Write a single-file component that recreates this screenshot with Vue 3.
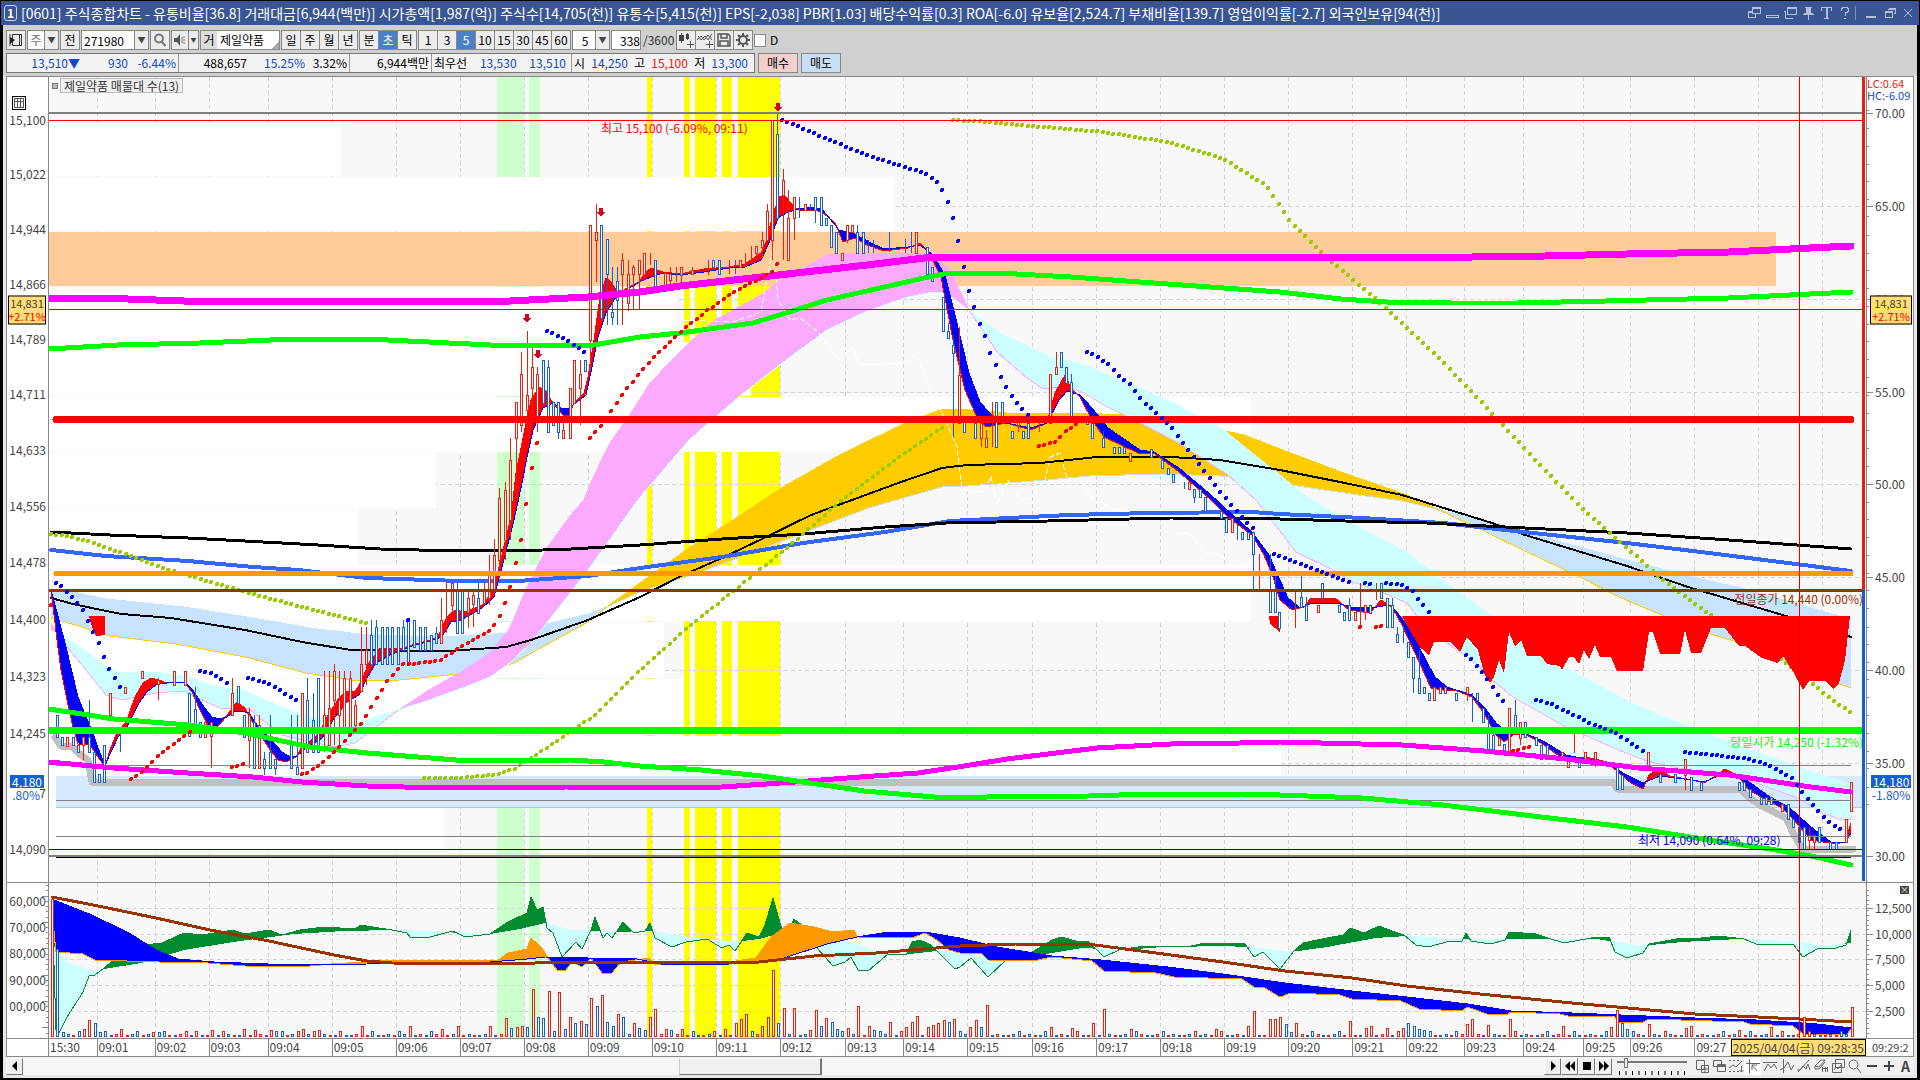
<template>
  <div class="window">
    <header class="title-bar">
      <span class="title-badge">1</span>
      <h1>[0601] 주식종합차트 - 유통비율[36.8] 거래대금[6,944(백만)] 시가총액[1,987(억)] 주식수[14,705(천)] 유통수[5,415(천)] EPS[-2,038] PBR[1.03] 배당수익률[0.3] ROA[-6.0] 유보율[2,524.7] 부채비율[139.7] 영업이익률[-2.7] 외국인보유[94(천)]</h1>
      <div class="title-actions">
        <button v-for="item in windowIcons" :key="item.name" :aria-label="item.name" :class="{ split: item.split }">
          <svg width="14" height="14" viewBox="0 0 14 14"><path :d="item.d" /></svg>
        </button>
      </div>
    </header>

    <div class="body">
      <div class="toolbar">
        <button class="box icon w20" aria-label="패널">
          <svg width="14" height="14" viewBox="0 0 14 14"><path d="M3.5 1.5h9v11h-9z M1 1v12M10.500 2v10" fill="none" stroke="#333" /><path d="M1 4l5 3-5 4z" fill="#222" /></svg>
        </button>
        <div class="group w32">
          <button class="box grow muted">주</button>
          <button class="box arrow" aria-label="주 선택">▼</button>
        </div>
        <button class="box w20">전</button>
        <div class="group w68">
          <input v-model="code" class="box grow" aria-label="종목코드" />
          <button class="box arrow" aria-label="종목 선택">▼</button>
        </div>
        <button class="box icon w20" aria-label="검색">
          <svg width="14" height="14" viewBox="0 0 14 14"><path d="M6 1.500a4 4 0 1 1 0 8a4 4 0 1 1 0-8M8.500 8.500l4 4.500" fill="none" stroke="#777" stroke-width="2" /></svg>
        </button>
        <div class="group w28">
          <button class="box icon grow" aria-label="음성">
            <svg width="14" height="14" viewBox="0 0 14 14"><path d="M1 5h3l3-4v12l-3-4H1z" fill="#555" /><path d="M9 4v6M11 3v2M11 6v2M11 9v2" stroke="#777" /></svg>
          </button>
          <button class="box arrow slim" aria-label="음성 선택">▼</button>
        </div>
        <div class="box stock w80"><span>거</span>제일약품</div>
        <div class="group segments">
          <button v-for="p in ['일', '주', '월', '년']" :key="p" class="box">{{ p }}</button>
        </div>
        <div class="group segments">
          <button v-for="p in ['분', '초', '틱']" :key="p" class="box" :class="{ active: p === unit }" @click="unit = p">{{ p }}</button>
        </div>
        <div class="group segments">
          <button v-for="n in [1, 3, 5, 10, 15, 30, 45, 60]" :key="n" class="box" :class="{ active: n === interval }" @click="interval = n">{{ n }}</button>
        </div>
        <div class="group w40">
          <input class="box grow center" aria-label="간격" :value="interval" />
          <button class="box arrow" aria-label="간격 선택">▼</button>
        </div>
        <div class="group w60">
          <input class="box count" aria-label="표시 개수" value="338" />
          <span class="total">/3600</span>
        </div>
        <div class="group segments">
          <button v-for="item in toolIcons" :key="item.name" class="box icon" :aria-label="item.name">
            <svg width="16" height="16" viewBox="0 0 16 16"><path :d="item.d" fill="none" stroke="#555" :stroke-width="item.w" /><path v-if="item.f" :d="item.f" fill="#444" /></svg>
          </button>
        </div>
        <label class="check"><input type="checkbox" />D</label>
      </div>

      <div class="quote">
        <div class="quote-cells">
          <div v-for="(cell, i) in quote" :key="i" class="cell" :class="'cell-' + i">
            <span v-for="part in cell" :key="part[0] + part[1]" :class="part[1]">{{ part[0] }}</span>
          </div>
        </div>
        <button class="order buy">매수</button>
        <button class="order sell">매도</button>
      </div>

      <main class="chart">
        <aside class="axis left">
          <button class="grid-button" aria-label="표">
            <svg width="10" height="10" viewBox="0 0 10 10"><path d="M0 0.500h10M0 3.500h10M0 9.500h10M0.500 0v10M3.500 0v10M6.500 0v10M9.500 0v10" stroke="#555" /></svg>
          </button>
          <span v-for="p in prices" :key="p[0]" class="price" :style="{ top: mainTop(p[1]) }">{{ p[0] }}</span>
          <div class="cursor-tag" :style="{ top: mainTop(309.5) }">14,831<em>+2.71%</em></div>
          <div class="now-tag" :style="{ top: mainTop(788) }"><b>4,180</b><i>.80%</i></div>
        </aside>

        <section class="plot main-plot">
          <div class="legend"><i></i><span>제일약품 매물대 수(13)</span></div>
          <svg class="canvas" viewBox="49 77 1817 805">
            <rect x="49" y="77" width="1817" height="805" fill="#f8f8f8" />
            <g fill="#cfc"><rect x="497" y="77" width="27" height="805" /><rect x="529" y="77" width="11" height="805" /></g>
            <g fill="#ff0"><rect v-for="y in yellow" :key="y[0]" :x="y[0]" y="77" :width="y[1]" height="805" /></g>
            <g class="grid">
              <path v-for="t in times" :key="t[0]" :d="`M${t[1]} 77V882`" />
              <path v-for="y in [206, 299, 392, 484, 577, 670, 763, 856]" :key="y" :d="`M49 ${y}.5H1863`" />
            </g>
            <rect v-for="b in volumeRows" :key="b[0]" x="49" :y="b[0]" :width="b[2] - 49" :height="b[1] - b[0]" :fill="b[3] || '#fff'" />

            <rect x="56" y="776" width="1807" height="31" fill="#d6eaff" />
            <path d="M56 807.500H1863" stroke="#9cf" />
            <polyline :points="support" class="line" stroke="#c0c0c0" stroke-width="7" />

            <path :d="fill(spanA, spanB)" fill="#c8e3ff" />
            <path :d="fill(spanB, spanA)" fill="#fc0" />
            <polyline :points="spanA" class="line" stroke="#c8e3ff" />
            <polyline :points="spanB" class="line" stroke="#fc0" />
            <path :d="fill(cyanEdge, pinkEdge)" fill="#cff" />
            <path :d="fill(pinkEdge, cyanEdge)" fill="#fcaaff" />
            <polyline :points="pinkEdge" class="line" stroke="#fcaaff" />
            <polyline :points="cyanEdge" class="line" stroke="#cff" />
            <polyline :points="lagging" class="line" stroke="#fff" stroke-dasharray="5 3" />

            <polyline :points="midBlack" class="line" stroke="#000" stroke-width="2" />
            <polyline :points="blueAverage" class="line" stroke="#36f" stroke-width="4" />
            <polyline :points="blackAverage" class="line" stroke="#000" stroke-width="3" />
            <circle v-for="(d, i) in oliveDots" :key="'o' + i" :cx="d[0]" :cy="d[1]" r="2" fill="#9c0" />
            <polygon :points="'1402,616 ' + redArea" fill="#f00" />
            <polygon points="89,616 105,616 105,635 96,636 92,627" fill="#f00" />
            <polygon points="1269,616 1280,616 1280,632 1275,628 1270,624" fill="#f00" />

            <path :d="fill(fast, slow)" fill="#f00" />
            <path :d="fill(slow, fast)" fill="#00f" />
            <polyline :points="fast" class="line" stroke="#f00" />
            <polyline :points="slow" class="line" stroke="#00f" />
            <g stroke-width="1">
              <g v-for="(c, i) in candles" :key="i" :stroke="c.color" fill="none">
                <path :d="`M${c.x} ${c.high}V${c.top}M${c.x} ${c.bottom}V${c.low}`" />
                <rect :x="c.x - 1" :y="c.top" width="2" :height="c.bottom - c.top" fill="#fff" />
              </g>
            </g>

            <path d="M56 765.500H1851M56 800.500H1851M56 836.500H1851" stroke="#808080" />
            <polyline :points="magentaLow" class="line" stroke="#f0f" stroke-width="5" />
            <polyline :points="greenLow" class="line" stroke="#0f0" stroke-width="5" />
            <polyline :points="magentaHigh" class="line" stroke="#f0f" stroke-width="7" />
            <polyline :points="greenHigh" class="line" stroke="#0f0" stroke-width="5" />
            <path d="M56 419.500H1851" class="line" stroke="#f00" stroke-width="7" />
            <path d="M56 573.500H1851" class="line" stroke="#f90" stroke-width="5" />
            <path d="M49 590.500H1863" stroke="#930" stroke-width="3" />
            <path d="M49 730.500H1863" stroke="#0f0" stroke-width="7" />
            <circle v-for="(d, i) in blueDots" :key="'b' + i" :cx="d[0]" :cy="d[1]" r="2" fill="#00f" />
            <circle v-for="(d, i) in redDots" :key="'r' + i" :cx="d[0]" :cy="d[1]" r="2" fill="#f00" />

            <path d="M49 113H1863M49 856H1863" stroke="#808080" stroke-width="2" />
            <path d="M56 857.500H1851" stroke="#000" />
            <path d="M49 849.500H1863" stroke="#00c" />
            <path d="M49 120.500H1863" stroke="#f00" />
            <path v-for="a in arrows" :key="a[0]" :d="`M${a[0] - 2} ${a[1] - 4}h4v4h2l-4 5l-4-5h2z`" fill="#d9001b" />
            <g class="note">
              <text x="601" y="133" fill="#f00">최고 15,100 (-6.09%, 09:11)</text>
              <text x="1863" y="604" fill="#930" text-anchor="end">전일종가 14,440 (0.00%)</text>
              <text x="1863" y="747" fill="#0f0" text-anchor="end">당일시가 14,250 (-1.32%)</text>
              <text x="1638" y="845" fill="#00c">최저 14,090 (0.64%, 09:28)</text>
            </g>
            <path d="M49 309.500H1863M1799.500 77V882" stroke="#e00000" />
            <path d="M1863.500 77V590" stroke="#e8200f" stroke-width="3" />
            <path d="M1863.500 590V881" stroke="#1460d0" stroke-width="3" />
          </svg>
        </section>

        <aside class="axis right">
          <svg class="ticks" viewBox="1866 77 48 805">
            <path v-for="k in 40" :key="k" :d="`M1866 ${94.500 + Math.round((k - 1) * 18.57)}h2`" />
          </svg>
          <p class="extremes"><span class="up">LC:0.64</span><span class="down">HC:-6.09</span></p>
          <span v-for="(y, i) in scaleRows" :key="y" class="scale" :style="{ top: mainTop(y) }">{{ 70 - i * 5 }}.00</span>
          <div class="cursor-tag" :style="{ top: mainTop(309.5) }">14,831<em>+2.71%</em></div>
          <div class="now-tag" :style="{ top: mainTop(788) }"><b>14,180</b><i>-1.80%</i></div>
        </aside>

        <aside class="axis left sub">
          <svg class="ticks" viewBox="7 883 41 155">
            <path v-for="k in 29" :key="k" :d="`M${(k - 3) % 5 ? 46 : 42} ${885.500 + Math.round((k - 1) * 5.270)}H48`" />
          </svg>
          <span v-for="p in amounts" :key="p[0]" class="price" :style="{ top: subTop(p[1]) }">{{ p[0] }}</span>
        </aside>

        <section class="plot sub">
          <svg class="canvas" viewBox="49 883 1817 155">
            <rect x="49" y="883" width="1817" height="155" fill="#f8f8f8" />
            <g fill="#cfc"><rect x="497" y="883" width="27" height="155" /><rect x="529" y="883" width="11" height="155" /></g>
            <g fill="#ff0"><rect v-for="y in yellow" :key="y[0]" :x="y[0]" y="883" :width="y[1]" height="155" /></g>
            <g class="grid">
              <path v-for="t in times" :key="t[0]" :d="`M${t[1]} 883V1038`" />
              <path v-for="y in [908, 934, 959, 985, 1011]" :key="y" :d="`M49 ${y}.5H1866`" />
            </g>
            <path :d="fill(moneyAverage, money)" fill="#cff" />
            <polyline :points="moneyAverage" class="line" stroke="#cff" />
            <polyline :points="money" class="line" stroke="#008c2e" />
            <path :d="fill(money, moneyAverage)" fill="#008c2e" />
            <path :d="fill(orangeLine, blueLine)" fill="#f90" />
            <path :d="fill(blueLine, orangeLine)" fill="#00f" />
            <polyline :points="orangeLine" class="line" stroke="#f90" />
            <polyline :points="blueLine" class="line" stroke="#00f" />
            <polyline :points="brownLine" class="line" stroke="#930" stroke-width="3" />
            <rect v-for="(v, i) in volumes" :key="i" :x="v.x" :y="1036.500 - v.h" width="2" :height="v.h" fill="#fff" :stroke="v.color" />
            <path d="M1799.500 883V1038" stroke="#e00000" />
          </svg>
        </section>

        <aside class="axis right sub">
          <button class="close-pane" aria-label="닫기">×</button>
          <svg class="ticks" viewBox="1866 883 48 155">
            <path v-for="k in 30" :key="k" :d="`M1866 ${887.500 + Math.round((k - 1) * 5.150)}h2`" />
          </svg>
          <span v-for="p in flows" :key="p[0]" class="scale" :style="{ top: subTop(p[1]) }">{{ p[0] }}</span>
        </aside>

        <div class="corner"></div>
        <div class="time-axis">
          <span :style="{ left: '0%' }">15:30</span>
          <span v-for="t in times.slice(0, 27)" :key="t[0]" :style="{ left: (t[1] - 49) / 18.17 + '%' }">{{ t[0] }}</span>
          <b>2025/04/04(금) 09:28:35</b>
        </div>
        <div class="corner end">09:29:2</div>
      </main>

      <footer class="bottom-bar">
        <button class="raised" aria-label="왼쪽"><svg width="8" height="10" viewBox="0 0 8 10"><path d="M6 0v10L1 5z" /></svg></button>
        <div class="track"><div class="thumb"></div></div>
        <div class="group">
          <button v-for="item in players" :key="item.name" class="raised" :aria-label="item.name">
            <svg width="12" height="10" viewBox="0 0 12 10"><path :d="item.d" /></svg>
          </button>
        </div>
        <label class="speed">
          <input v-model="speed" type="range" min="0" max="10" aria-label="속도" />
          <svg width="70" height="4" viewBox="0 0 70 4"><path v-for="k in 11" :key="k" :d="`M${k * 6.500 - 4} 0v4`" stroke="#000" /></svg>
        </label>
        <div class="group drawing">
          <button v-for="item in drawIcons" :key="item.name" :aria-label="item.name" :class="{ pressed: item.pressed }">
            <svg width="16" height="16" viewBox="0 0 16 16"><path :d="item.d" fill="none" :stroke="item.c || '#666'" :stroke-width="item.w || 1" /></svg>
          </button>
          <button class="letter">A</button>
        </div>
      </footer>
    </div>
  </div>
</template>

<script setup>
import { ref } from "vue";

const code = ref("271980");
const unit = ref("초");
const interval = ref(5);
const speed = ref(1);

const mainTop = (y) => ((y - 77) / 805) * 100 + "%";
const subTop = (y) => ((y - 883) / 155) * 100 + "%";

const parse = (text) => text.trim().split(/\s+/).map((p) => p.split(",").map(Number));

// linear interpolation of a series at x
const valueAt = (points, x) => {
  if (x <= points[0][0]) return points[0][1];
  for (let i = 1; i < points.length; i++) {
    const [x1, y1] = points[i];
    if (x <= x1) {
      const [x0, y0] = points[i - 1];
      return y0 + ((y1 - y0) * (x - x0)) / (x1 - x0 || 1);
    }
  }
  return points[points.length - 1][1];
};

// area where series a runs above series b
const fill = (a, b) => {
  const pa = parse(a);
  const pb = parse(b);
  const top = [];
  const bottom = [];
  for (let x = 51; x <= 1851; x += 2) {
    const ya = valueAt(pa, x);
    const yb = valueAt(pb, x);
    top.push(`${x} ${Math.min(ya, yb).toFixed(1)}`);
    bottom.unshift(`${x} ${yb.toFixed(1)}`);
  }
  return `M${top.join("L")}L${bottom.join("L")}Z`;
};

const BAR = 5.34;
const dots = (groups) =>
  groups.flatMap((text) => {
    const points = parse(text);
    const last = points[points.length - 1][0];
    const result = [];
    for (let x = points[0][0]; x <= last + 1; x += BAR) result.push([Math.round(x), Math.round(valueAt(points, x))]);
    return result;
  });

const times = [
  ["09:01", 97.5], ["09:02", 155.5], ["09:03", 209.5], ["09:04", 268.5], ["09:05", 332.5], ["09:06", 396.5],
  ["09:07", 460.5], ["09:08", 524.5], ["09:09", 588.5], ["09:10", 652.5], ["09:11", 716.5], ["09:12", 780.5],
  ["09:13", 845.5], ["09:14", 903.5], ["09:15", 967.5], ["09:16", 1032.5], ["09:17", 1096.5], ["09:18", 1160.5],
  ["09:19", 1224.5], ["09:20", 1288.5], ["09:21", 1352.5], ["09:22", 1406.5], ["09:23", 1464.5], ["09:24", 1523.5],
  ["09:25", 1583.5], ["09:26", 1630.5], ["09:27", 1694.5], ["09:28", 1758.5], ["09:29", 1822.5],
];
const yellow = [[647, 5], [684, 6], [695, 21], [722, 10], [738, 42]];
const volumeRows = [
  [123, 176, 341], [177, 231, 894], [232, 286, 1776, "#ffcc99"], [287, 341, 676], [342, 396, 751], [397, 452, 1251],
  [453, 508, 436], [509, 564, 358], [565, 621, 1251], [622, 678, 664], [679, 735, 683], [736, 793, 1281], [794, 850, 444],
];
const prices = [
  ["15,100", 120], ["15,022", 174], ["14,944", 229], ["14,866", 284], ["14,789", 339], ["14,711", 394], ["14,633", 450],
  ["14,556", 506], ["14,478", 562], ["14,400", 619], ["14,323", 676], ["14,245", 733], ["14,167", 793], ["14,090", 849],
];
const scaleRows = [113, 206, 299, 392, 484, 577, 670, 763, 856];
const amounts = [["60,000", 901], ["70,000", 927], ["80,000", 953], ["90,000", 980], ["00,000", 1006]];
const flows = [["12,500", 908], ["10,000", 934], ["7,500", 959], ["5,000", 985], ["2,500", 1011]];
const arrows = [[527, 318], [538, 354], [601, 212], [778, 107]];

const quote = [
  [["13,510▼", "down a"], ["930", "down b"], ["-6.44%", "down c"]],
  [["488,657", "d"], ["15.25%", "down e"], ["3.32%", "f"]],
  [["6,944백만", ""]],
  [["최우선", ""], ["13,530", "down"], ["13,510", "down"]],
  [["시", ""], ["14,250", "down"], ["고", ""], ["15,100", "up"], ["저", ""], ["13,300", "down"]],
];

const magentaHigh = "49,298 100,298 184,301 420,301 510,301 588,297 640,292 680,286 761,277 867,265 933,257 1140,257 1280,257 1472,257 1545,256 1627,254 1729,252 1851,246";
const greenHigh = "49,349 118,345 200,343 294,339 367,339 408,341 490,345 518,345 543,345 588,346 640,337 680,333 753,323 786,313 827,300 867,291 924,278 949,273 998,273 1071,277 1140,282 1280,292 1341,299 1386,302 1451,303 1517,303 1606,301 1729,298 1851,292";
const blackAverage = "51,532 110,535 188,538 245,541 318,545 380,549 457,551 543,550 571,549 640,545 722,539 803,534 885,527 946,523 1048,521 1171,518 1280,519 1345,521 1427,523 1525,528 1627,533 1729,540 1851,549";
const blueAverage = "51,550 106,556 188,561 253,567 298,570 367,578 461,581 518,581 588,576 640,568 722,557 803,543 885,532 950,521 1069,515 1150,513 1252,512 1280,514 1362,518 1443,523 1533,533 1627,543 1709,553 1851,571";
const midBlack = "51,598 73,604 106,611 122,614 171,618 245,630 302,642 351,650 400,651 449,651 506,647 531,640 588,620 640,597 681,576 722,558 762,539 811,515 852,500 901,482 942,468 967,465 1040,463 1097,457 1171,457 1220,460 1280,470 1345,483 1402,495 1492,523 1525,535 1627,566 1688,587 1786,616 1851,637";
const spanA = "51,589 78,593 106,599 184,607 253,618 310,628 359,634 408,636 461,636 510,633 539,626 588,614 612,605 640,592 701,572 762,549 803,533 869,508 942,487 967,486 1048,480 1089,476 1162,474 1220,476 1280,483 1304,487 1358,495 1402,501 1435,509 1476,518 1525,532 1627,560 1688,576 1741,588 1839,616 1851,620";
const spanB = "51,618 82,627 110,636 176,644 245,657 306,673 359,681 400,680 449,675 498,668 514,663 551,642 588,622 608,606 640,583 689,548 738,517 783,487 836,457 901,425 940,410 958,409 1007,413 1073,413 1130,415 1187,423 1244,435 1280,449 1341,472 1407,495 1435,508 1484,531 1525,551 1574,574 1619,597 1664,616 1711,634 1737,642 1839,684 1851,688";
const cyanEdge = "51,630 73,643 88,653 106,667 118,672 163,673 188,677 212,686 245,691 269,702 302,715 327,722 359,722 392,712 429,700 465,687 490,677 510,663 531,643 571,592 588,570 640,497 655,480 689,440 704,427 741,395 786,360 827,330 867,311 908,297 933,292 945,292 969,310 998,332 1031,348 1051,357 1084,365 1140,388 1167,400 1211,423 1224,430 1252,453 1280,475 1304,495 1341,518 1370,533 1407,552 1431,572 1492,616 1566,668 1631,703 1688,727 1770,757 1831,778 1851,784";
const pinkEdge = "51,623 57,635 82,665 106,695 122,700 155,693 184,691 196,697 220,708 249,709 265,722 282,735 302,740 335,747 355,743 376,727 396,712 429,690 461,672 490,653 510,628 527,587 547,548 571,515 584,500 592,480 610,443 631,413 651,382 684,348 712,322 761,295 778,282 806,267 827,255 855,253 929,253 949,268 969,310 998,353 1027,378 1043,389 1067,386 1084,393 1104,405 1138,422 1179,443 1228,475 1256,500 1280,531 1296,552 1333,570 1353,582 1382,592 1407,603 1417,616 1447,643 1476,663 1492,680 1513,697 1566,727 1619,750 1647,761 1688,770 1737,775 1762,785 1798,798 1823,813 1839,819 1851,820";
const magentaLow = "49,762 114,768 188,773 253,777 302,782 367,786 441,788 567,787 640,788 722,787 795,782 860,777 918,773 958,767 1007,759 1097,748 1171,744 1240,743 1280,742 1402,745 1484,751 1566,759 1639,768 1729,775 1811,787 1851,792";
const greenLow = "49,709 82,714 114,719 188,725 245,733 310,747 367,753 469,761 571,760 604,762 640,766 701,770 762,776 824,785 864,791 934,797 987,797 1089,796 1150,794 1240,794 1280,795 1362,798 1443,805 1541,817 1627,827 1709,840 1770,849 1811,856 1851,865";
const support = "55,737 61,746 73,747 78,753 88,760 92,782 1613,782 1617,789 1741,789 1749,798 1762,806 1774,812 1786,818 1794,835 1802,849 1853,849";
const lagging = "676,320 733,322 761,312 773,247 778,300 790,320 800,318 818,332 839,360 853,347 859,365 908,363 916,353 929,387 941,410 957,447 962,490 985,492 991,476 997,505 1008,480 1020,500 1031,498 1045,480 1050,457 1060,453 1069,486 1083,487 1097,502 1117,510 1160,518 1174,533 1190,533 1204,553 1215,553 1236,563 1248,574";

const fast = "51,590 57,640 61,670 67,700 73,727 78,744 84,744 90,745 98,757 105,767 110,750 116,735 127,720 135,697 143,683 151,678 159,680 167,683 184,682 192,692 200,710 208,725 216,728 222,722 233,707 237,702 245,708 257,730 269,748 278,760 286,762 296,757 302,747 318,735 327,717 339,698 347,691 355,692 361,682 369,663 380,648 388,648 400,649 412,645 437,638 447,617 455,610 465,612 482,605 494,590 500,563 508,530 512,510 516,473 524,433 531,400 539,387 545,390 553,403 563,415 569,415 573,405 584,393 588,377 594,340 600,297 606,278 612,283 618,293 639,282 645,273 651,268 663,272 680,274 704,269 729,267 745,264 761,253 767,240 773,213 780,196 786,197 794,207 800,210 814,210 822,212 835,223 843,242 855,238 867,245 884,251 908,248 920,243 929,252 941,277 953,340 965,390 976,415 986,427 996,425 1006,423 1031,430 1047,423 1055,393 1065,375 1071,388 1080,397 1092,420 1104,437 1138,453 1154,453 1179,472 1211,500 1228,517 1252,535 1264,555 1273,577 1280,600 1292,610 1304,607 1311,598 1335,598 1349,610 1370,613 1381,600 1392,607 1402,625 1415,653 1431,688 1443,690 1455,690 1472,697 1484,713 1496,735 1504,742 1513,735 1525,734 1541,743 1562,758 1574,757 1590,758 1607,762 1619,773 1631,783 1643,789 1649,775 1658,769 1670,776 1692,780 1704,783 1717,775 1725,769 1737,775 1749,790 1770,802 1782,808 1794,820 1811,840 1835,844 1845,842 1851,823";
const slow = "51,590 53,597 65,643 78,697 86,717 92,730 98,748 105,765 118,737 127,727 139,703 147,692 157,684 167,683 184,682 192,689 204,707 212,717 220,719 227,717 233,712 241,711 249,713 257,725 269,737 282,752 290,757 297,756 306,748 322,738 335,717 347,702 359,695 367,678 376,663 388,656 400,651 412,646 437,639 443,635 451,622 461,620 482,608 494,597 502,567 514,520 522,483 527,457 533,430 543,408 553,403 563,409 569,408 586,395 592,367 598,337 606,313 616,297 639,282 651,277 663,273 680,275 704,272 729,268 745,267 761,260 769,243 778,218 786,213 798,209 810,207 822,209 839,230 855,234 871,243 884,249 908,247 920,245 933,255 945,275 953,307 961,340 969,373 980,402 994,418 1006,423 1031,428 1047,423 1059,400 1067,391 1080,395 1092,408 1108,428 1140,450 1154,452 1179,468 1211,495 1236,518 1252,532 1269,555 1280,580 1288,598 1300,608 1313,603 1337,603 1351,607 1370,608 1390,605 1402,618 1419,647 1435,677 1447,687 1472,695 1484,707 1496,723 1509,733 1529,735 1545,742 1566,755 1607,763 1623,773 1643,783 1660,776 1692,780 1704,782 1725,773 1741,776 1770,797 1790,808 1811,827 1831,842 1845,843 1851,833";
const redArea = "1415,643 1429,655 1434,642 1451,642 1460,652 1467,637 1478,650 1484,673 1490,683 1494,677 1499,660 1504,673 1509,632 1515,646 1521,640 1527,656 1541,656 1547,664 1560,666 1562,670 1569,657 1574,657 1579,664 1584,650 1589,659 1595,645 1600,657 1611,657 1617,671 1643,671 1649,632 1653,632 1660,654 1680,654 1685,630 1691,653 1701,653 1711,628 1725,628 1739,646 1745,646 1762,658 1778,663 1783,656 1794,673 1803,690 1809,681 1825,681 1834,689 1839,683 1845,660 1850,616";

const blueDots = dots([
  "56,583 61,586 72,597 82,608 88,621 99,644 104,657 109,668 115,678 120,687",
  "200,671 211,673 219,677 227,683", "248,678 265,682 281,691 297,701", "547,331 563,338 585,352", "408,620",
  "782,120 788,122 827,139 867,155 927,174 932,178 938,183 943,191 948,203 953,218 959,245 964,269 969,291 975,309 980,325 986,339 991,355 1002,379 1012,397 1023,410 1028,415",
  "1087,352 1098,357 1108,364 1118,375 1130,384 1140,398 1146,404 1157,413 1173,429 1183,443 1194,457 1205,472 1220,491 1232,506 1247,523 1252,528",
  "1274,554 1285,558 1317,570 1353,584", "1365,583 1370,584", "1386,583 1402,585 1413,591 1419,600 1424,606 1429,612",
  "1466,655 1472,659 1477,666 1482,672 1493,687 1498,695 1504,702", "1536,700 1551,704 1568,712 1594,725 1616,733 1643,751",
  "1685,752 1723,756 1749,759 1766,764 1782,772 1792,778 1802,791 1808,799 1814,806 1819,812 1829,822 1840,829",
]);
const redDots = dots([
  "51,605", "131,779 141,773 152,762 157,757 168,748 184,736 192,730", "232,767 243,764",
  "302,774 307,773 318,766 328,758 339,747 350,735 360,725 371,708 376,699 382,690 387,682 392,676 403,664 414,664 441,660 451,653 472,640 489,631 494,625 499,617 505,603 510,588 515,566 521,540 526,506 531,471 537,443",
  "590,438 601,426 612,410 622,395 638,375 654,357 676,336 686,327 708,310 729,295 745,286 761,278 772,272 777,264",
  "1039,446 1055,442 1065,432 1076,424", "1360,627", "1376,627 1381,626", "1513,751 1531,746",
]);
const oliveDots = dots([
  "51,534 67,536 88,541 122,553 163,568 204,580 245,592 302,607 366,623",
  "424,778 457,778 494,775 514,769 536,755 563,737 596,714 637,673 644,667 687,628 750,578 799,538 820,519 844,498 895,460 946,425",
  "953,120 990,122 1031,126 1104,132 1140,138 1169,142 1224,159 1267,186 1290,221 1321,252 1386,308 1439,358 1488,409 1541,466 1584,510 1627,548 1664,581 1712,616 1782,660 1814,685 1829,697 1851,713",
]);

// x,high,top,bottom,low
const rising = `67,737,737,746,746 83,737,737,745,760 110,693,693,715,715 125,687,687,693,693 142,671,671,678,678 158,678,680,684,700 174,671,671,685,685 185,671,671,685,685 205,720,722,737,737 211,722,722,736,768 232,678,693,715,715 249,708,715,740,768 259,715,725,768,768
302,693,693,768,768 324,671,715,730,752 329,671,708,745,745 334,664,671,700,745 339,671,700,715,745 344,671,678,730,730 350,671,678,730,735 355,700,705,725,730 361,627,664,691,691 366,627,650,664,685 441,598,620,643,643 446,583,598,598,633 452,583,583,605,613 468,590,598,612,628 473,590,595,604,627 484,583,590,603,603 489,555,575,598,605 494,539,555,590,592 499,488,498,560,570 505,482,490,540,560 510,438,460,520,540
516,402,402,438,500 521,352,374,425,432 527,331,395,410,432 532,345,367,388,415 537,367,374,422,432 563,423,430,438,438 570,388,388,438,438 574,360,360,403,403 580,360,374,388,425 590,225,225,340,370 596,204,232,240,282 622,253,260,274,325 628,260,274,303,311 633,265,267,274,310 639,260,260,274,310 644,253,253,274,280 650,253,260,260,265 665,273,273,288,288 670,267,274,280,289 676,267,274,274,282 681,267,267,275,289 692,267,270,274,275 708,260,267,267,275 729,260,267,267,274 740,260,260,267,267 745,253,260,260,267 751,246,253,253,262 756,246,246,253,260 762,232,240,247,257 767,204,211,240,240 772,120,120,240,260 783,169,180,195,260 788,190,218,260,260 794,197,197,218,240
805,204,204,210,210 842,253,253,260,260 847,225,225,240,243 852,225,225,232,232 916,232,232,253,253 959,327,375,423,423 981,423,423,438,447 986,430,438,447,447 992,402,415,420,447 1018,417,417,425,432 1039,417,423,423,432 1050,374,374,423,423 1056,352,367,374,374 1130,453,453,461,461 1189,482,482,489,489 1232,518,518,532,532 1259,554,554,554,589
1295,590,598,598,628 1318,605,605,612,612 1355,612,612,620,620 1360,583,612,612,627 1365,605,605,612,620 1376,583,598,598,600 1434,687,687,700,700 1440,687,687,693,693 1445,687,687,693,693 1467,687,687,693,701 1499,738,738,745,745 1509,708,708,751,751 1520,722,722,738,745 1562,752,752,759,759 1568,759,759,767,767 1574,733,752,752,752 1585,752,752,759,759 1595,752,752,759,767 1648,752,752,767,767 1685,759,759,775,790 1782,804,804,811,811 1809,827,835,840,849 1814,835,835,842,849 1846,819,819,842,842 1851,782,782,811,811`;
const falling = `57,715,715,737,737 62,737,737,745,745 73,737,737,745,745 78,745,745,752,752 89,700,737,752,752 94,752,752,782,782 99,774,774,782,782 104,745,745,782,782 120,730,736,736,752 189,693,693,736,736 195,687,709,727,727 200,722,722,737,737 238,686,686,703,703 244,715,715,737,737 254,715,722,768,768 264,752,759,768,775 270,715,752,768,768 275,759,759,768,775 291,715,745,768,768 297,715,767,774,774 307,678,700,752,752 313,693,720,752,752 318,678,678,752,752
371,620,635,664,664 376,620,627,664,664 382,627,627,664,664 387,627,627,664,664 392,627,627,664,664 398,627,627,664,664 403,620,627,650,650 408,620,620,664,664 414,620,620,647,647 420,627,627,650,650 425,627,627,650,650 431,635,635,650,650 436,627,633,643,643 457,583,590,633,633 462,590,590,633,633 478,583,598,613,613 543,360,360,403,403 548,360,367,432,432 553,402,402,425,425 558,402,402,432,439 585,360,360,371,371 601,225,225,318,318 607,239,239,274,325 612,267,312,317,325 617,267,281,300,325 655,260,260,288,288 713,260,260,267,267 719,260,260,274,274 735,260,267,267,274
777,112,134,218,218 799,197,211,211,218 810,204,210,210,211 815,197,197,210,223 821,197,197,225,225 826,218,218,225,225 831,225,225,247,247 836,232,232,253,253 857,225,232,253,253 863,232,232,253,253 868,240,246,246,253 873,240,246,246,253 889,232,246,246,252 905,239,246,246,253 911,232,246,246,253 927,247,247,274,274 932,267,267,281,281 943,297,297,331,331 948,323,331,338,338 953,338,345,353,438 964,417,417,432,432 975,423,423,438,438 996,402,402,447,447 1002,402,402,423,423 1012,431,431,438,438 1023,431,431,438,438 1028,423,423,438,438 1061,352,352,367,367 1066,367,367,383,383 1071,374,382,417,417 1087,417,417,424,424 1092,423,423,438,438 1103,431,438,447,447 1114,447,447,453,453 1119,447,447,453,453 1124,447,447,453,453 1151,449,449,457,457 1162,460,460,468,468 1168,468,468,474,474 1173,474,474,482,482 1184,482,482,482,489 1194,489,489,497,503 1200,489,489,497,497 1205,497,497,511,511 1221,511,511,518,518 1226,518,518,532,532 1237,525,532,532,540 1242,532,532,539,539 1248,532,532,539,539 1253,532,532,554,589 1270,554,590,612,612 1275,575,590,612,612 1279,612,612,628,628
1301,575,597,607,607 1306,597,605,620,620 1322,583,583,598,598 1339,605,605,612,612 1344,612,612,620,620 1349,598,605,620,620 1370,605,605,613,613 1381,583,583,598,598 1387,598,598,627,627 1392,598,605,627,627 1397,627,634,642,642 1403,627,642,642,642 1408,642,642,657,657 1413,657,657,678,693 1419,650,678,693,693 1424,687,687,693,693 1429,693,693,700,700 1456,693,693,700,700 1472,693,700,700,722 1477,693,693,700,700 1483,708,708,722,722 1488,715,730,752,752 1493,730,735,752,752 1504,744,744,752,752 1515,700,715,727,727 1525,722,722,737,737 1536,737,737,745,745 1541,745,745,759,759 1547,745,745,759,759 1579,759,759,767,767 1617,767,767,789,789 1622,775,775,789,789 1660,774,774,782,782 1675,774,774,782,782 1691,777,777,790,790 1701,782,782,790,790 1739,782,782,790,790 1744,782,782,790,790 1750,789,789,797,797 1761,797,797,804,804 1766,797,797,804,804 1771,797,797,804,804 1788,804,804,819,819 1793,819,819,827,827 1799,827,827,842,842 1804,827,827,849,849 1819,827,827,842,842 1830,842,842,849,849 1836,842,842,849,849`;
const toCandles = (text, color) =>
  parse(text).map(([x, high, top, bottom, low]) => ({ x: x + 0.5, high, top: top + 0.5, bottom: bottom + 0.5, low, color }));
const candles = [...toCandles(rising, "#e8200f"), ...toCandles(falling, "#1460d0")];

const brownLine = "52,897 98,906 156,918 210,930 269,941 334,955 367,961 392,963 520,964 551,962 759,962 814,956 876,953 960,946 1015,944 1095,945 1156,953 1223,962 1285,971 1352,978 1407,986 1480,994 1572,1003 1695,1014 1799,1019 1851,1022";
const moneyAverage = "55,947 67,963 92,971 104,969 141,963 184,950 233,942 294,934 343,931 392,930 441,932 490,934 520,929 545,923 569,930 612,932 649,931 686,937 735,942 759,939 781,933 808,930 833,937 869,949 900,955 937,951 960,953 1009,960 1040,955 1082,948 1125,950 1162,947 1229,946 1266,949 1291,952 1327,947 1376,938 1407,936 1450,939 1511,939 1597,939 1640,946 1682,942 1738,939 1799,942 1823,946 1851,943";
const money = "52,897 56,1030 58,1035 67,1017 83,992 89,976 95,975 104,968 116,958 132,950 144,945 162,943 184,933 202,935 233,930 245,934 269,930 282,935 300,930 324,927 355,929 361,925 373,927 392,930 407,933 410,937 426,938 453,931 465,937 490,934 508,922 527,913 531,897 537,910 543,907 547,928 553,933 562,957 576,942 582,949 591,930 595,917 603,938 607,933 612,938 623,922 634,933 645,931 650,923 655,938 672,947 686,942 707,939 722,948 729,945 735,951 747,933 759,937 765,925 773,898 782,930 790,928 794,919 811,932 817,948 833,966 845,962 851,957 858,970 868,971 888,954 906,955 912,942 920,940 931,945 943,957 955,969 960,967 971,958 988,977 1006,960 1027,955 1052,940 1061,937 1076,941 1089,942 1104,957 1119,950 1144,946 1187,947 1205,943 1229,943 1245,944 1254,957 1263,952 1280,969 1294,951 1303,943 1327,938 1343,935 1350,928 1364,933 1379,926 1395,932 1404,935 1416,945 1428,947 1450,941 1462,941 1466,933 1471,941 1490,944 1505,940 1509,932 1536,934 1548,938 1564,943 1597,937 1609,937 1615,952 1627,958 1643,953 1649,944 1682,938 1701,938 1719,936 1744,939 1756,944 1793,944 1803,957 1817,949 1836,948 1846,945 1851,930";
const blueLine = "54,900 92,915 129,933 156,950 178,959 214,962 294,965 367,964 429,963 490,962 527,959 545,957 588,958 637,959 661,964 729,964 759,962 784,958 827,944 857,937 888,932 925,932 960,938 997,947 1052,956 1101,960 1168,967 1223,974 1285,983 1352,991 1407,997 1468,1004 1511,1011 1572,1013 1695,1018 1756,1020 1817,1024 1851,1028";
const orangeLine = "51,900 56,952 83,954 95,960 159,962 208,963 245,966 300,967 331,964 380,961 441,960 471,960 497,961 508,953 527,949 531,938 542,948 548,958 557,970 566,970 572,962 582,967 591,958 602,973 612,973 621,962 649,958 655,965 722,963 756,958 771,937 790,923 814,927 833,932 854,930 857,937 912,938 925,933 937,940 949,950 960,953 981,953 988,960 1033,961 1052,957 1092,961 1104,971 1156,973 1174,977 1242,979 1254,987 1263,987 1280,997 1291,993 1340,995 1352,999 1401,1001 1419,1009 1462,1011 1467,1007 1490,1015 1508,1014 1511,1012 1560,1014 1572,1017 1614,1016 1618,1022 1643,1022 1649,1019 1744,1022 1750,1024 1793,1026 1803,1034 1847,1034 1851,1029";

const spikesUp = "52,137 83,7 89,16 120,7 152,4 184,5 211,6 243,7 254,6 269,6 297,5 302,7 319,6 360,10 409,10 442,7 457,10 490,10 505,18 516,9 521,10 531,47 547,45 558,44 569,19 580,15 591,38 601,41 618,22 634,13 650,19 655,27 666,7 681,7 713,5 724,7 734,13 740,17 745,22 761,10 766,19 772,66 783,28 793,28 809,6 815,26 826,18 847,8 857,30 868,10 889,14 905,9 910,14 916,20 927,9 933,11 938,13 943,16 954,17 970,9 976,16 986,31 1050,9 1071,8 1093,13 1103,27 1131,7 1215,7 1248,10 1253,25 1269,17 1275,17 1280,19 1295,13 1349,15 1365,8 1371,10 1387,8 1403,8 1466,12 1472,17 1488,11 1510,17 1563,10 1611,9 1617,26 1648,12 1686,8 1691,10 1740,6 1771,9 1804,19 1851,29";
const spikesDown = "57,87 61,4 94,13 99,4 157,4 275,5 511,8 526,9 537,19 542,18 553,5 564,7 575,13 585,12 596,30 607,14 612,10 623,19 639,8 644,6 671,6 777,13 820,10 831,14 836,7 873,6 878,5 948,14 981,9 1285,12 1291,4 1408,13 1414,10 1419,7 1424,6 1622,13 1627,7 1632,5";
const volumes = [];
for (let i = 0; i < 338; i++) {
  const x = Math.round(51 + i * BAR);
  const up = parse(spikesUp).find((s) => Math.abs(s[0] - x) < 3);
  const down = parse(spikesDown).find((s) => Math.abs(s[0] - x) < 3);
  const rise = up ? true : down ? false : (i * 7) % 5 > 2;
  const h = up ? up[1] : down ? down[1] : 1 + ((i * 13) % 11 > 8 ? 4 : (i * 5) % 3 ? 0 : 1);
  volumes.push({ x: x + 0.5, h, color: rise ? "#e8200f" : "#1460d0" });
}

const windowIcons = [
  { name: "분리", d: "M5.5 1.500h8v6h-8zM5 2.500h9M5.500 5.500h-4v6h7v-4M1 6.500h4" },
  { name: "접기", d: "M1 9.500h12M1 11.500h12M1 9v3M13 9v3" },
  { name: "복사", d: "M4.500 1.500h9v7h-9zM4 2.500h10M2.500 5v7h7M1 5.500h2" },
  { name: "고정", d: "M4 1.500h7M5.500 2v5M7.500 2v5M9.500 2v5M6.500 2v5M8.500 2v5M3 7.500h9M2 8.500h11M7.500 9v5" },
  { name: "글꼴", d: "M2 1.500h11M2.500 1v4M12.500 1v4M7 2v10M8 2v10M5 12.500h5" },
  { name: "도움말", d: "M4 4.500v-2h1v-1h5v1h1v3h-1v1h-2v3M7 12h2" },
  { name: "최소화", d: "M2 10.500h10M2 11.500h10", split: true },
  { name: "이전 크기", d: "M5.500 2.500h7v5h-2M5 3.500h8M2.500 5.500h7v6h-7zM2 6.500h8" },
  { name: "닫기", d: "M3 3l8 8M11 3l-8 8" },
];
const toolIcons = [
  { name: "차트 추가", d: "M3.500 1v10M9.500 1v7M9 12.500h7M12.500 9v7", f: "M1 3h5v6H1zM8 2h3v5H8z", w: 1 },
  { name: "지표 추가", d: "M0 8l4-4 3 4 4-5 4 5M1 4l3 4 4-4 3 4 4-6M9 12.500h7M12.500 9v7", w: 1 },
  { name: "저장", d: "M2 2h10l2 2v10H2zM5 2v4h6V2M4 14V9h8v5", w: 1.5 },
  { name: "설정", d: "M8 4a4 4 0 1 1 0 8a4 4 0 1 1 0-8M8 1v3M8 12v3M1 8h3M12 8h3M3 3l2 2M11 11l2 2M3 13l2-2M11 5l2-2", w: 2 },
];
const players = [
  { name: "재생", d: "M4 0v10l5-5z" },
  { name: "뒤로", d: "M6 0v10L1 5zM11 0v10L6 5z" },
  { name: "정지", d: "M2 1h8v8H2z" },
  { name: "앞으로", d: "M1 0v10l5-5zM6 0v10l5-5z" },
];
const drawIcons = [
  { name: "창 추가", d: "M2.500 2.500h8v9h-8zM7.500 7.500h7v7h-7zM11 9v5M9 11h5" },
  { name: "창 겹치기", d: "M2.500 2.500h8v6h-8zM6.500 6.500h8v7h-8zM6 7.500h9M6 8.500h9" },
  { name: "영역", d: "M1 2.500h2M5 2.500h2M9 2.500h2M1 13.500h2M5 13.500h2M9 13.500h2M1 10l4-3 3 2 6-6M13.500 8v6M11.500 12l2 2 2-2" },
  { name: "십자선", d: "M1 5.500h14M4.500 1v14M7 7v5M7 7h5M7 7l5 6", pressed: true },
  { name: "추세선", d: "M1 4.500h14M2 13l4-7 3 4 3-4 3 5" },
  { name: "수직선", d: "M4.500 1v14M1 12l4-2 4-6 3 8 3-5" },
  { name: "대각선", d: "M2 14l11-12M1 12h3l3-4 3 3 2-5 2 6" },
  { name: "지우기", d: "M2 8l6-6h4l-6 7zM2 8v3h4l6-7M9.500 9v5M12.500 9v5M14.500 9v5M9 10.500h6" },
  { name: "화면 저장", d: "M5.500 1.500h9v8h-9zM2.500 5.500h9v9h-9zM4 12l2-3 2 2 3-4" },
  { name: "확대경", d: "M6.500 2a4.500 4.500 0 1 1 0 9a4.500 4.500 0 1 1 0-9M10 10l4 5" },
  { name: "축소", d: "M3 8h10", w: 2, c: "#444" },
  { name: "확대", d: "M3 8h10M8 3v10", w: 2, c: "#444" },
];
</script>

<style>
body {
  margin: 0;
  background: #000;
}
</style>

<style scoped>
.window {
  padding: 1px 1px 3px;
  background: #000;
  color: #000;
  font-family: "Noto Sans CJK KR", "Liberation Sans", sans-serif;
  font-size: 12px;
  line-height: 16px;
}

button,
input {
  box-sizing: border-box;
  min-width: 0;
  margin: 0;
  padding: 0;
  border: 0;
  background: none;
  color: inherit;
  font: inherit;
}

.title-bar {
  display: flex;
  align-items: center;
  height: 24px;
  padding: 0 4px 0 3px;
  background: #3a5692;
  color: #fff;
}

.title-badge {
  width: 11px;
  height: 14px;
  margin-right: 4px;
  border: 1px solid #cdd6ea;
  border-radius: 3px;
  font-weight: bold;
  line-height: 14px;
  text-align: center;
}

h1 {
  flex: 1;
  margin: 0;
  font-size: 14px;
  font-weight: normal;
  line-height: 22px;
  white-space: nowrap;
}

.title-actions {
  display: flex;
  gap: 4px;
}

.title-actions button {
  width: 14px;
  height: 14px;
}

.title-actions svg {
  display: block;
  fill: none;
  stroke: #b4c0da;
  shape-rendering: crispEdges;
}

.title-actions .split {
  width: 24px;
  padding-left: 8px;
  border-left: 1px solid #8090b0;
}

.body {
  margin: 0 2px;
  padding: 0 3px 3px;
  background: #e8e8e8;
}

.toolbar,
.quote {
  display: flex;
  align-items: center;
  margin: 0 -3px;
  padding: 0 3px;
  background: #d0d0d0;
}

.toolbar {
  gap: 1px;
  padding-top: 5px;
  padding-bottom: 3px;
}

.group {
  display: flex;
}

.group .box + .box {
  margin-left: -1px;
}

.box {
  box-sizing: border-box;
  height: 20px;
  border: 1px solid #888;
  background: #ececec;
  font-size: 12px;
  line-height: 18px;
  text-align: center;
}

input.box,
.stock {
  background: #fff;
  text-align: left;
}

input.box {
  width: 100%;
  padding-left: 2px;
}

input.center {
  text-align: center;
}

input.count {
  width: 30px;
  text-align: right;
}

.grow {
  flex: 1;
}

.icon {
  display: flex;
  align-items: center;
  justify-content: center;
}

.w20 { width: 20px; }
.w28 { width: 28px; }
.w32 { width: 32px; }
.w40 { width: 38px; }
.w60 { width: 64px; }
.w68 { width: 68px; }
.w80 { width: 80px; }

.muted {
  background: #fafafa;
  color: #777;
}

.arrow {
  width: 15px;
  color: #444;
  font-size: 8px;
}

.slim {
  width: 11px;
  font-size: 6px;
}

.stock {
  background: linear-gradient(135deg, transparent 92%, #aaa 92%) #fff;
}

.stock span {
  display: inline-block;
  width: 16px;
  margin-right: 3px;
  background: #ddd;
  text-align: center;
}

.segments .box {
  width: 20px;
}

.box.active {
  background: #4a80c8;
  color: #fff;
}

.total {
  margin-left: 2px;
  color: #333;
  line-height: 20px;
}

.check {
  display: flex;
  align-items: center;
  gap: 4px;
}

.check input {
  width: 12px;
  height: 13px;
  border: 1px solid #888;
  background: #fff;
  appearance: none;
}

.quote {
  gap: 3px;
  padding-bottom: 3px;
}

.quote-cells {
  display: flex;
  box-sizing: border-box;
  width: 749px;
  height: 20px;
  border: 1px solid #777;
  background: #f2f2f2;
}

.cell {
  display: flex;
  box-sizing: border-box;
  align-items: center;
  justify-content: flex-end;
  padding: 0 2px;
  border-right: 1px solid #999;
}

.cell span {
  text-align: right;
}

.cell-0 { width: 172px; }
.cell-1 { width: 171px; }
.cell-2 { width: 82px; }
.cell-3 { width: 140px; justify-content: space-between; padding-right: 5px; }
.cell-4 { flex: 1; justify-content: space-between; padding-right: 6px; border-right: 0; }
.b { width: 48px; }
.c { width: 48px; }
.e { width: 58px; }
.f { width: 42px; }
.down { color: #1048c8; }
.up { color: #e8200f; }

.order {
  width: 40px;
  height: 20px;
  border: 1px solid #888;
}

.buy { background: #f4d0cc; }
.sell { background: #c8dff5; }

.chart {
  display: grid;
  grid-template-columns: 41px 1fr 47px;
  border: 1px solid #888;
  background: #fff;
}

.axis {
  position: relative;
  overflow: hidden;
  color: #444;
}

.plot {
  position: relative;
  border-left: 1px solid #888;
}

.axis.right {
  border-left: 1px solid #888;
}

.sub {
  border-top: 1px solid #888;
}

.canvas {
  display: block;
  width: 100%;
  height: auto;
  shape-rendering: crispEdges;
}

.grid path {
  fill: none;
  stroke: #d4d4d4;
  stroke-dasharray: 4 3;
}

.line {
  fill: none;
  stroke-linecap: round;
  stroke-linejoin: round;
}

.note {
  font-size: 12px;
}

.legend {
  position: absolute;
  top: 1px;
  left: 3px;
  display: flex;
  align-items: center;
  gap: 2px;
}

.legend i {
  width: 4px;
  height: 4px;
  border: 1px solid #777;
  background: #bbb;
}

.legend span {
  padding: 0 3px;
  border: 1px solid #bbb;
  background: #f0f0f0;
  color: #333;
  line-height: 13px;
}

.price,
.scale {
  position: absolute;
  right: 2px;
  line-height: 14px;
  transform: translateY(-50%);
}

.scale {
  right: auto;
  left: 8px;
}

.scale::before {
  content: "";
  position: absolute;
  top: 7px;
  left: -8px;
  width: 6px;
  border-top: 1px solid #888;
}

.ticks {
  position: absolute;
  inset: 0;
  width: 100%;
  height: 100%;
  fill: none;
  stroke: #888;
  shape-rendering: crispEdges;
}

.grid-button {
  position: absolute;
  top: 19px;
  left: 5px;
  display: flex;
  align-items: center;
  justify-content: center;
  width: 14px;
  height: 14px;
  border: 1px solid #000;
}

.extremes {
  position: absolute;
  left: 0;
  display: flex;
  flex-direction: column;
  margin: 0;
  font-size: 11px;
  line-height: 12px;
}

.cursor-tag {
  position: absolute;
  right: 2px;
  left: 1px;
  display: flex;
  box-sizing: border-box;
  flex-direction: column;
  align-items: center;
  height: 29px;
  border: 1px solid #000;
  background: #ffdd77;
  font-size: 11px;
  line-height: 13px;
  transform: translateY(-50%);
}

.right .cursor-tag {
  right: 1px;
  left: 3px;
}

.cursor-tag em {
  color: #f00;
  font-style: normal;
}

.now-tag {
  position: absolute;
  right: 4px;
  left: 3px;
  line-height: 13px;
  transform: translateY(-50%);
}

.right .now-tag {
  right: 2px;
  left: 4px;
}

.now-tag b,
.now-tag i {
  display: block;
  font-style: normal;
  font-weight: normal;
  text-align: center;
}

.now-tag b {
  background: #1460d0;
  color: #fff;
}

.now-tag i {
  background: #fff;
  color: #1460d0;
}

.left .now-tag i {
  margin-right: 4px;
  text-align: right;
}

.close-pane {
  position: absolute;
  top: 3px;
  right: 4px;
  width: 9px;
  height: 8px;
  background: #444;
  color: #fff;
  font-size: 9px;
  line-height: 8px;
}

.time-axis,
.corner {
  height: 17px;
  border-top: 1px solid #888;
  color: #444;
}

.time-axis {
  position: relative;
}

.time-axis span,
.time-axis b {
  position: absolute;
  top: 0;
  bottom: 0;
  padding-left: 1px;
  border-left: 1px solid #888;
}

.time-axis b {
  right: 0;
  padding: 0 1px;
  border: 1px solid #000;
  background: #ffdd77;
  font-weight: normal;
  line-height: 15px;
  white-space: nowrap;
}

.corner.end {
  padding-left: 6px;
  font-size: 11px;
}

.bottom-bar {
  display: flex;
  align-items: center;
  height: 18px;
  background: #f0f0f0;
}

.raised {
  display: flex;
  align-items: center;
  justify-content: center;
  width: 17px;
  height: 17px;
  border: 1px solid;
  border-color: #fff #777 #777 #fff;
  background: #f0f0f0;
}

.track {
  flex: 1;
  height: 17px;
  background: #f6f6f6;
}

.thumb {
  box-sizing: border-box;
  width: 9.4%;
  height: 17px;
  margin-left: 43.1%;
  border: 1px solid;
  border-color: #fff #777 #777 #ccc;
  border-right-width: 2px;
  background: #f0f0f0;
}

.speed {
  display: flex;
  flex-direction: column;
  gap: 3px;
  width: 70px;
  margin: 0 6px 0 5px;
}

.speed input {
  height: 10px;
  appearance: none;
  background: linear-gradient(transparent 3px, #777 3px, #777 5px, #fff 5px, transparent 6px);
}

.speed input::-webkit-slider-thumb {
  width: 4px;
  height: 10px;
  border: 1px solid #777;
  background: #eee;
  appearance: none;
}

.drawing button {
  display: flex;
  align-items: center;
  justify-content: center;
  width: 17px;
  height: 17px;
}

.drawing .pressed {
  background: #fff;
}

.drawing .letter {
  color: #444;
  font-size: 14px;
  font-weight: bold;
}
</style>
